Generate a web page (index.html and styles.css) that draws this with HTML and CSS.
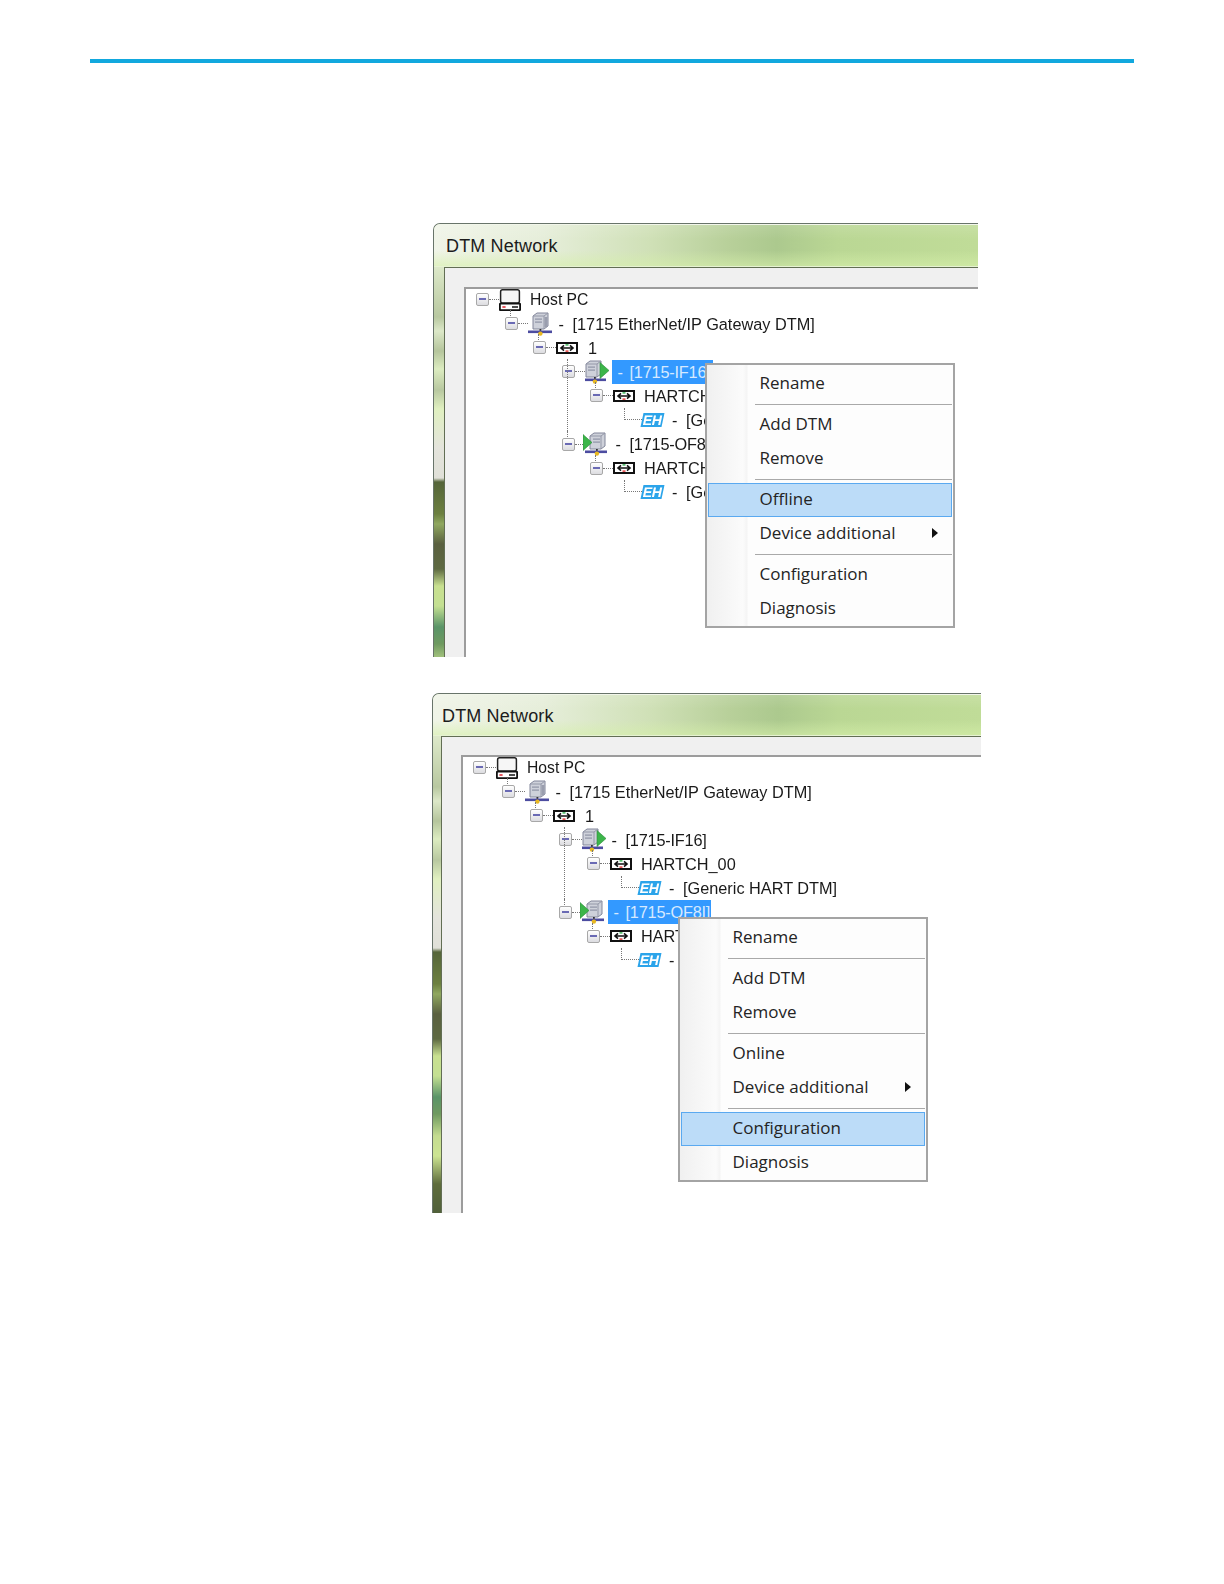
FILE: index.html
```html
<!DOCTYPE html>
<html lang="en">
<head>
<meta charset="utf-8">
<title>DTM Network</title>
<link rel="stylesheet" href="styles.css">
</head>
<body>
<svg class="defs" aria-hidden="true">
  <symbol id="pc" viewBox="0 0 22 22">
    <rect x="1.6" y="0.8" width="18.8" height="13.2" rx="2" fill="#f6f6f6" stroke="#222" stroke-width="1.5"/>
    <rect x="0.9" y="14.6" width="20.2" height="6.6" rx="0.5" fill="#fff" stroke="#111" stroke-width="1.8"/>
    <rect x="3.4" y="17.2" width="3.2" height="1.6" fill="#e0303a"/>
    <rect x="13" y="17.2" width="6" height="1.6" fill="#222"/>
  </symbol>
  <symbol id="dev" viewBox="0 0 24 24">
    <path d="M5 4 L9 1 L20 1 L20 14 L16 17 L5 17 Z" fill="#ced1da" stroke="#82869a"/>
    <path d="M5 4 L16 4 L16 17 M16 4 L20 1" fill="none" stroke="#9498a8"/>
    <rect x="16.5" y="5" width="3" height="10" fill="#9a9eae"/>
    <rect x="7" y="6.5" width="7" height="1.2" fill="#8f94a6"/>
    <rect x="7" y="9.5" width="7" height="1.2" fill="#8f94a6"/>
    <rect x="11.5" y="17" width="1.8" height="2" fill="#333"/>
    <rect x="0" y="18.5" width="24" height="2.6" fill="#4c4ca0"/>
    <circle cx="12.4" cy="21.6" r="2.2" fill="#e8b820"/>
  </symbol>
  <symbol id="dev-right" viewBox="0 0 24 24">
    <path d="M1 4 L5 1 L16 1 L16 14 L12 17 L1 17 Z" fill="#ced1da" stroke="#82869a"/>
    <path d="M1 4 L12 4 L12 17 M12 4 L16 1" fill="none" stroke="#9498a8"/>
    <rect x="3" y="6.5" width="7" height="1.2" fill="#8f94a6"/>
    <rect x="3" y="9.5" width="7" height="1.2" fill="#8f94a6"/>
    <rect x="9" y="17" width="1.8" height="2" fill="#333"/>
    <rect x="0" y="18.5" width="21" height="2.6" fill="#4c4ca0"/>
    <circle cx="9.9" cy="21.6" r="2.2" fill="#e8b820"/>
    <path d="M15 2.5 L24 10.5 L15 18.5 Z" fill="#3cb54a" stroke="#2a8a38" stroke-width=".6"/>
  </symbol>
  <symbol id="dev-left" viewBox="0 0 24 24">
    <path d="M7 4 L11 1 L22 1 L22 14 L18 17 L7 17 Z" fill="#ced1da" stroke="#82869a"/>
    <path d="M7 4 L18 4 L18 17 M18 4 L22 1" fill="none" stroke="#9498a8"/>
    <rect x="10" y="6.5" width="7" height="1.2" fill="#8f94a6"/>
    <rect x="10" y="9.5" width="7" height="1.2" fill="#8f94a6"/>
    <rect x="13" y="17" width="1.8" height="2" fill="#333"/>
    <rect x="2" y="18.5" width="22" height="2.6" fill="#4c4ca0"/>
    <circle cx="13.9" cy="21.6" r="2.2" fill="#e8b820"/>
    <path d="M0 2.5 L9 10.5 L0 18.5 Z" fill="#3cb54a" stroke="#2a8a38" stroke-width=".6"/>
  </symbol>
  <symbol id="chan" viewBox="0 0 22 12">
    <rect x="1" y="1" width="20" height="10" fill="#fff" stroke="#111" stroke-width="2"/>
    <path d="M5 6 H17 M8 3.4 L5 6 L8 8.6 M14 3.4 L17 6 L14 8.6" fill="none" stroke="#111" stroke-width="1.6"/>
    <rect x="9.5" y="2.2" width="3" height="1.4" fill="#34b050"/>
    <rect x="9.5" y="8.4" width="3" height="1.4" fill="#e03030"/>
  </symbol>
</svg>

<main class="page">
  <div class="rule"></div>

  <section class="window window-first">
    <header class="title">DTM Network</header>
    <div class="client">
      <div class="pane">
        <div class="row lv0"><span class="box"></span><span class="dots d10"></span><svg class="ic ic-pc"><use href="#pc"/></svg><span class="txt t9 host">Host PC</span></div>
        <div class="row lv1"><span class="box"></span><span class="dots d10"></span><svg class="ic ic-dev"><use href="#dev"/></svg><span class="dash">-</span><span class="txt">[1715 EtherNet/IP Gateway DTM]</span></div>
        <div class="row lv2"><span class="box"></span><span class="dots d10"></span><svg class="ic ic-chan"><use href="#chan"/></svg><span class="txt t10">1</span></div>
        <div class="row lv3"><span class="box long"></span><span class="dots d10"></span><svg class="ic ic-dev"><use href="#dev-right"/></svg><span class="sel"><span class="dash dash-sel">-</span><span class="code">[1715-IF16]</span></span></div>
        <div class="row lv4"><span class="box"></span><span class="dots d10"></span><svg class="ic ic-chan"><use href="#chan"/></svg><span class="txt t9">HARTCH_00</span></div>
        <div class="row lv5"><span class="elbow"></span><span class="eh">EH</span><span class="dash dash-eh">-</span><span class="txt">[Ge</span></div>
        <div class="row lv3"><span class="box"></span><span class="dots d8"></span><svg class="ic ic-devl"><use href="#dev-left"/></svg><span class="dash dash-of">-</span><span class="txt code">[1715-OF8I]</span></div>
        <div class="row lv4"><span class="box"></span><span class="dots d10"></span><svg class="ic ic-chan"><use href="#chan"/></svg><span class="txt t9">HARTCH_00</span></div>
        <div class="row lv5"><span class="elbow"></span><span class="eh">EH</span><span class="dash dash-eh">-</span><span class="txt">[Ge</span></div>
      </div>
    </div>
    <div class="menu menu-first">
      <div class="item">Rename</div>
      <div class="sep"></div>
      <div class="item">Add DTM</div>
      <div class="item">Remove</div>
      <div class="sep"></div>
      <div class="item hot">Offline</div>
      <div class="item sub">Device additional<span class="caret"></span></div>
      <div class="sep"></div>
      <div class="item">Configuration</div>
      <div class="item">Diagnosis</div>
    </div>
  </section>

  <section class="window window-second">
    <header class="title">DTM Network</header>
    <div class="client">
      <div class="pane">
        <div class="row lv0"><span class="box"></span><span class="dots d10"></span><svg class="ic ic-pc"><use href="#pc"/></svg><span class="txt t9 host">Host PC</span></div>
        <div class="row lv1"><span class="box"></span><span class="dots d10"></span><svg class="ic ic-dev"><use href="#dev"/></svg><span class="dash">-</span><span class="txt">[1715 EtherNet/IP Gateway DTM]</span></div>
        <div class="row lv2"><span class="box"></span><span class="dots d10"></span><svg class="ic ic-chan"><use href="#chan"/></svg><span class="txt t10">1</span></div>
        <div class="row lv3"><span class="box long"></span><span class="dots d10"></span><svg class="ic ic-dev"><use href="#dev-right"/></svg><span class="dash dash-plain">-</span><span class="txt code">[1715-IF16]</span></div>
        <div class="row lv4"><span class="box"></span><span class="dots d10"></span><svg class="ic ic-chan"><use href="#chan"/></svg><span class="txt t9">HARTCH_00</span></div>
        <div class="row lv5"><span class="elbow"></span><span class="eh">EH</span><span class="dash dash-eh">-</span><span class="txt">[Generic HART DTM]</span></div>
        <div class="row lv3"><span class="box"></span><span class="dots d8"></span><svg class="ic ic-devl"><use href="#dev-left"/></svg><span class="sel sel-of"><span class="dash dash-sel">-</span><span class="code">[1715-OF8I]</span></span></div>
        <div class="row lv4"><span class="box"></span><span class="dots d10"></span><svg class="ic ic-chan"><use href="#chan"/></svg><span class="txt t9">HART</span></div>
        <div class="row lv5"><span class="elbow"></span><span class="eh">EH</span><span class="dash dash-eh">-</span></div>
      </div>
    </div>
    <div class="menu menu-second">
      <div class="item">Rename</div>
      <div class="sep"></div>
      <div class="item">Add DTM</div>
      <div class="item">Remove</div>
      <div class="sep"></div>
      <div class="item">Online</div>
      <div class="item sub">Device additional<span class="caret"></span></div>
      <div class="sep"></div>
      <div class="item hot">Configuration</div>
      <div class="item">Diagnosis</div>
    </div>
  </section>
</main>
</body>
</html>
```

FILE: styles.css
```css
* { box-sizing: border-box; }
html, body { margin: 0; background: #fff; }
.defs { display: block; width: 0; height: 0; overflow: hidden; }
.page { padding: 59px 90px 0 90px; height: 1584px; overflow: hidden; }
.rule { height: 4px; background: #11a8de; }

.window {
  position: relative;
  display: flex;
  flex-direction: column;
  border-top: 1px solid #68746a;
  border-left: 1px solid #68746a;
  border-top-left-radius: 7px;
  overflow: hidden;
  filter: blur(0.35px);
  background-color: #dce8c8;
  background-image: linear-gradient(180deg,
    #dce8c8 44px, #b8c8a0 93px, #dce8c8 107px, #b5c59c 127px, #dcecc0 145px,
    #b8c8a0 166px, #e0f0c0 185px, #e4e4dc 224px, #e0e0d8 254px, #55653a 258px,
    #6c8040 290px, #90a860 300px, #5a6040 320px, #5e6a42 345px, #c8e090 362px,
    #c4e092 382px, #5a9468 403px, #6f9a60 420px, #c4dc90 442px, #cce492 462px,
    #5e6c3c 490px, #50603a 520px);
}
.window-first { width: 545px; height: 434px; margin: 160px 0 0 343px; }
.window-second { width: 549px; height: 520px; margin: 36px 0 0 342px; }

.title {
  flex: none;
  height: 43px;
  padding: 9px 0 0 12px;
  font: 18px/24px "Liberation Sans", Arial, sans-serif;
  letter-spacing: .15px;
  color: #1c1c1c;
  border-top: 1px solid #f2f6ea;
  border-bottom: 1px solid #e6f2d2;
  background-image:
    linear-gradient(180deg, rgba(255,255,255,.12), rgba(255,255,255,0) 35%, rgba(255,255,255,0) 62%, rgba(214,240,170,.6)),
    linear-gradient(90deg, #f0f4e8 0, #e6eeda 20%, #cfe0b6 40%, #b8d09a 54%, #acc98e 63%, #bad794 74%, #c0dc98 100%);
}
.window-second .title { height: 42px; padding-left: 9px; }

.client {
  flex: 1;
  display: flex;
  min-height: 0;
  margin-left: 10px;
  padding: 19px 0 0 19px;
  background: #f0f0f0;
  border-top: 1px solid #626e54;
  border-left: 1px solid #626e54;
}
.window-second .client { margin-left: 8px; padding: 18px 0 0 19px; }

.pane {
  flex: 1;
  padding: 0 0 0 10px;
  background: #fff;
  border-top: 2px solid #9c9c9c;
  border-left: 2px solid #9c9c9c;
  font: 16.3px/24px "Liberation Sans", Arial, sans-serif;
  color: #1a1a1a;
}

.row {
  display: flex;
  align-items: center;
  height: 24.1px;
  white-space: nowrap;
}
.row:first-child { margin-top: -1.5px; }
.lv1 { margin-left: 28.5px; }
.lv2 { margin-left: 57px; }
.lv3 { margin-left: 85.5px; }
.lv4 { margin-left: 114px; }
.lv5 { margin-left: 147.5px; }

.box {
  position: relative;
  flex: none;
  width: 13px;
  height: 13px;
  border: 1.5px solid #a8a8a8;
  border-radius: 2px;
  background: linear-gradient(180deg, #fff, #dcdce0);
}
.box::before {
  content: "";
  position: absolute;
  left: 2px;
  right: 2px;
  top: 4px;
  height: 2px;
  background: #6a6ab4;
}
.box::after {
  content: "";
  position: absolute;
  left: 4px;
  top: -8px;
  height: 6px;
  border-left: 1px dotted #777;
}
.lv0 .box::after { display: none; }
.box.long::after { top: -7px; height: 72px; }

.dots { flex: none; border-top: 1px dotted #777; }
.d10 { width: 10px; }
.d8 { width: 8px; }

.ic { flex: none; display: block; }
.ic-pc { width: 22px; height: 22px; }
.ic-dev { width: 24px; height: 24px; }
.ic-devl { width: 24px; height: 24px; }
.ic-chan { width: 22px; height: 12px; }

.txt { flex: none; }
.t9 { margin-left: 9px; }
.t10 { margin-left: 10px; }
.host { font-size: 15.7px; }
.code { letter-spacing: -.2px; }

.dash { flex: none; display: inline-block; width: 14px; margin-left: 7px; }
.dash-sel { margin-left: 0; width: 12px; }
.dash-plain { margin-left: 6px; }
.dash-of { margin-left: 9px; }
.dash-eh { margin-left: 9px; }

.sel {
  flex: none;
  height: 24px;
  margin-left: 3px;
  padding: 0 2px 0 6px;
  background: #3399ff;
  color: #d6e9ff;
}
.sel-of { margin-left: 4px; padding-right: 1px; }

.elbow {
  flex: none;
  width: 18.5px;
  height: 12px;
  margin-top: -12px;
  border-left: 1px dotted #777;
  border-bottom: 1px dotted #777;
}
.eh {
  flex: none;
  width: 21px;
  height: 14px;
  transform: skewX(-12deg);
  background: #2ba4ea;
  color: #fff;
  font: 700 14px/14px "Liberation Sans", Arial, sans-serif;
  letter-spacing: -.3px;
  text-align: center;
}

.menu {
  position: absolute;
  z-index: 2;
  width: 250px;
  padding-top: 1.5px;
  border: 2px solid #a4a4a4;
  background: linear-gradient(90deg, #f0f0f0 0, #fbfbfb 36px, #f4f4f4 40px, #fdfdfd 41px);
  font: 17px/31.5px "Open Sans", "Liberation Sans", sans-serif;
  color: #242424;
}
.menu-first { left: 271px; top: 139px; height: 265px; }
.menu-second { left: 245px; top: 223px; height: 265px; }

.item {
  position: relative;
  height: 33.5px;
  padding-left: 52.5px;
}
.hot {
  margin: 0 1px;
  padding-left: 50.5px;
  background: #bcdcf8;
  border: 1.5px solid #5aa9f0;
  line-height: 30.5px;
}
.sep {
  height: 8px;
  margin: 0 1px 0 48px;
  background: linear-gradient(#a9a9a9, #a9a9a9) center / 100% 1px no-repeat;
}
.caret {
  position: absolute;
  right: 15px;
  top: 11px;
  border-left: 6px solid #111;
  border-top: 5px solid transparent;
  border-bottom: 5px solid transparent;
}
```
